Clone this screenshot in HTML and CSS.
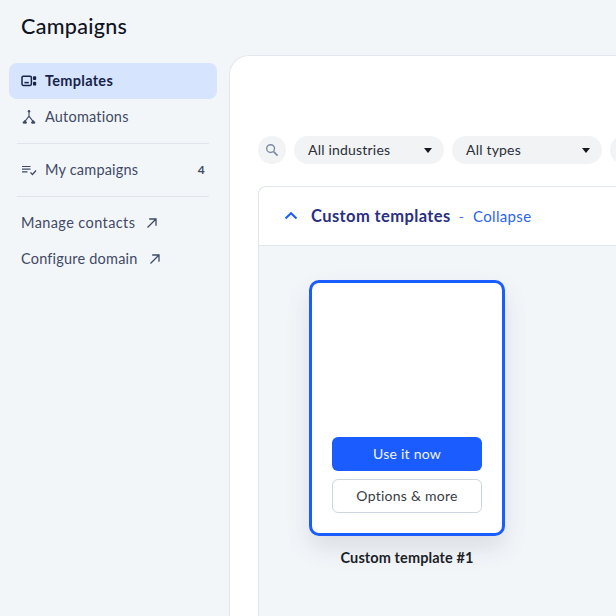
FILE: index.html
```html
<!DOCTYPE html>
<html lang="en">
<head>
<meta charset="utf-8">
<title>Campaigns</title>
<link rel="stylesheet" href="styles.css">
</head>
<body>
<div class="shell">
  <aside class="sidebar">
    <h1 class="title">Campaigns</h1>
    <nav class="nav">
      <a class="item active">
        <svg class="icon" viewBox="0 0 16 16" fill="none" stroke="currentColor" stroke-width="1.5"><rect x="1" y="3.2" width="9.4" height="9.2" rx="1.3"/><path d="M3.4 9.6h4.4"/><rect x="12" y="3.2" width="3.2" height="3.8" rx=".9" fill="currentColor" stroke="none"/><rect x="12" y="8.8" width="3.2" height="3.8" rx=".9" fill="currentColor" stroke="none"/></svg>
        <span>Templates</span>
      </a>
      <a class="item">
        <svg class="icon" viewBox="0 0 16 16" fill="none" stroke="currentColor" stroke-width="1.1"><path d="M8 2.5v4.6M8 7.1 3.8 12.6M8 7.1l4.2 5.5"/><path d="M1.6 13.2 3.8 11l2.2 2.2a1.4 1.4 0 0 1-2.2 1.2 1.4 1.4 0 0 1-2.2-1.2zM10 13.2l2.2-2.2 2.2 2.2a1.4 1.4 0 0 1-2.2 1.2 1.4 1.4 0 0 1-2.2-1.2z" fill="currentColor" stroke="none"/><circle cx="8" cy="2.2" r="1.2" fill="currentColor" stroke="none"/></svg>
        <span>Automations</span>
      </a>
      <hr class="rule">
      <a class="item">
        <svg class="icon" viewBox="0 0 16 16" fill="none" stroke="currentColor" stroke-width="1.2"><path d="M1 4.5h8.5M1 7.2h8.5M1 9.9h5.5"/><path d="m9.5 10.5 2 2 3.5-4" stroke-width="1.3"/></svg>
        <span class="grow">My campaigns</span>
        <b class="count">4</b>
      </a>
      <hr class="rule">
      <a class="item link">
        <span>Manage contacts</span>
        <svg class="arrow" viewBox="0 0 12 12" fill="none" stroke="currentColor" stroke-width="1.3"><path d="M1.5 10.5 10 2M3.2 2H10v6.8"/></svg>
      </a>
      <a class="item link tight">
        <span>Configure domain</span>
        <svg class="arrow" viewBox="0 0 12 12" fill="none" stroke="currentColor" stroke-width="1.3"><path d="M1.5 10.5 10 2M3.2 2H10v6.8"/></svg>
      </a>
    </nav>
  </aside>
  <main class="panel">
    <div class="filters">
      <button class="search" aria-label="Search">
        <svg viewBox="0 0 14 14" fill="none" stroke="currentColor" stroke-width="1.4"><circle cx="5.6" cy="5.6" r="3.9"/><path d="m8.6 8.6 4 4" stroke-width="1.7"/></svg>
      </button>
      <div class="pill"><span>All industries</span><i class="caret"></i></div>
      <div class="pill"><span>All types</span><i class="caret"></i></div>
      <div class="pill"></div>
    </div>
    <section class="group">
      <header class="group-head">
        <svg class="chevron" viewBox="0 0 14 10" fill="none" stroke="currentColor" stroke-width="2"><path d="m1.5 7.5 5.5-5.3 5.5 5.3"/></svg>
        <h2 class="group-title">Custom templates</h2>
        <span class="dash">-</span>
        <a class="collapse">Collapse</a>
      </header>
      <div class="group-body">
        <figure class="template">
          <div class="card">
            <button class="btn primary">Use it now</button>
            <button class="btn secondary">Options &amp; more</button>
          </div>
          <figcaption class="caption">Custom template #1</figcaption>
        </figure>
      </div>
    </section>
  </main>
</div>
</body>
</html>
```
FILE: styles.css
```css
* { box-sizing: border-box; }
html, body { margin: 0; height: 100%; overflow: hidden; }
body {
  background: #f3f6f9;
  font-family: "Lato", "Open Sans", sans-serif;
  color: #3f4a66;
}
.shell { display: flex; width: 100%; height: 100%; overflow: hidden; }
.sidebar { width: 229px; flex: none; padding: 0 12px 0 9px; }
.title {
  margin: 0;
  padding: 14px 0 0 12px;
  height: 63px;
  font-size: 21.5px;
  line-height: 24px;
  font-weight: 500;
  color: #10141f;
  letter-spacing: .3px;
}
.nav { display: flex; flex-direction: column; }
.item {
  display: flex;
  align-items: center;
  height: 36px;
  padding: 0 12px 1px;
  border-radius: 8px;
  font-size: 14.5px;
  letter-spacing: .2px;
}
.item.active { background: #d6e4fd; color: #18234a; font-weight: 700; letter-spacing: .3px; }
.icon { width: 16px; height: 16px; margin-right: 8px; flex: none; }
.grow { flex: 1; }
.count { font-size: 12px; font-weight: 700; color: #3f4a66; }
.rule {
  width: 192px;
  margin: 8px 0 8px 8px;
  border: 0;
  border-top: 1px solid #e0e5ec;
}
.link { letter-spacing: .4px; }
.link.tight { letter-spacing: .2px; }
.arrow { width: 12px; height: 12px; margin-left: 11px; flex: none; color: #3f4a66; }
.panel {
  flex: 1;
  min-width: 0;
  overflow: hidden;
  background: #fff;
  margin-top: 55px;
  border: 1px solid #e3e8ee;
  border-right: 0;
  border-bottom: 0;
  border-radius: 20px 0 0 0;
  padding: 80px 0 0 28px;
}
.filters { display: flex; gap: 8px; height: 28px; width: 640px; }
.search {
  width: 28px;
  height: 28px;
  padding: 0;
  border: 0;
  border-radius: 50%;
  background: #f1f3f5;
  color: #7f8ba3;
  display: flex;
  align-items: center;
  justify-content: center;
  flex: none;
}
.search svg { width: 14px; height: 14px; }
.pill {
  width: 150px;
  flex: none;
  height: 28px;
  padding: 0 12px 2px 14px;
  border-radius: 14px;
  background: #f1f3f5;
  display: flex;
  align-items: center;
  justify-content: space-between;
  font-size: 14px;
  letter-spacing: .2px;
  color: #2b2f38;
}
.caret {
  width: 0;
  height: 0;
  border-left: 4.5px solid transparent;
  border-right: 4.5px solid transparent;
  border-top: 5px solid #15181f;
  margin-top: 2px;
}
.group {
  margin-top: 22px;
  width: 500px;
  border: 1px solid #e0e6ee;
  border-right: 0;
  border-bottom: 0;
  border-radius: 8px 0 0 0;
  height: 440px;
  overflow: hidden;
}
.group-head {
  height: 59px;
  display: flex;
  align-items: center;
  padding-left: 25px;
  border-bottom: 1px solid #e0e6ee;
}
.chevron { width: 14px; height: 10px; color: #1b5cff; margin-right: 13px; flex: none; }
.group-title {
  margin: 0;
  font-size: 16.5px;
  font-weight: 700;
  letter-spacing: .4px;
  color: #2a2f80;
}
.dash { margin: 0 9px 0 8px; color: #3f6df5; font-size: 14px; }
.collapse { color: #2b63f5; font-size: 15px; letter-spacing: .35px; }
.group-body { background: #f3f6f9; height: 380px; padding: 34px 0 0 50px; }
.template { margin: 0; width: 196px; }
.card {
  height: 256px;
  background: #fff;
  border: 3px solid #1b5cff;
  border-radius: 10px;
  box-shadow: 0 12px 24px rgba(40, 55, 85, .12);
  padding: 154px 20px 0;
  display: flex;
  flex-direction: column;
  gap: 8px;
}
.btn {
  height: 34px;
  border-radius: 6px;
  font-family: inherit;
  font-size: 14px;
  letter-spacing: .25px;
  padding: 0 0 2px;
  flex: none;
}
.primary { background: #1b5cff; border: 0; color: #f2f5ff; }
.secondary { background: #fff; border: 1px solid #ced6e0; color: #3a3d45; }
.caption {
  margin-top: 13px;
  text-align: center;
  font-size: 14.5px;
  line-height: 18px;
  font-weight: 700;
  letter-spacing: .1px;
  color: #1c1f28;
}
```
